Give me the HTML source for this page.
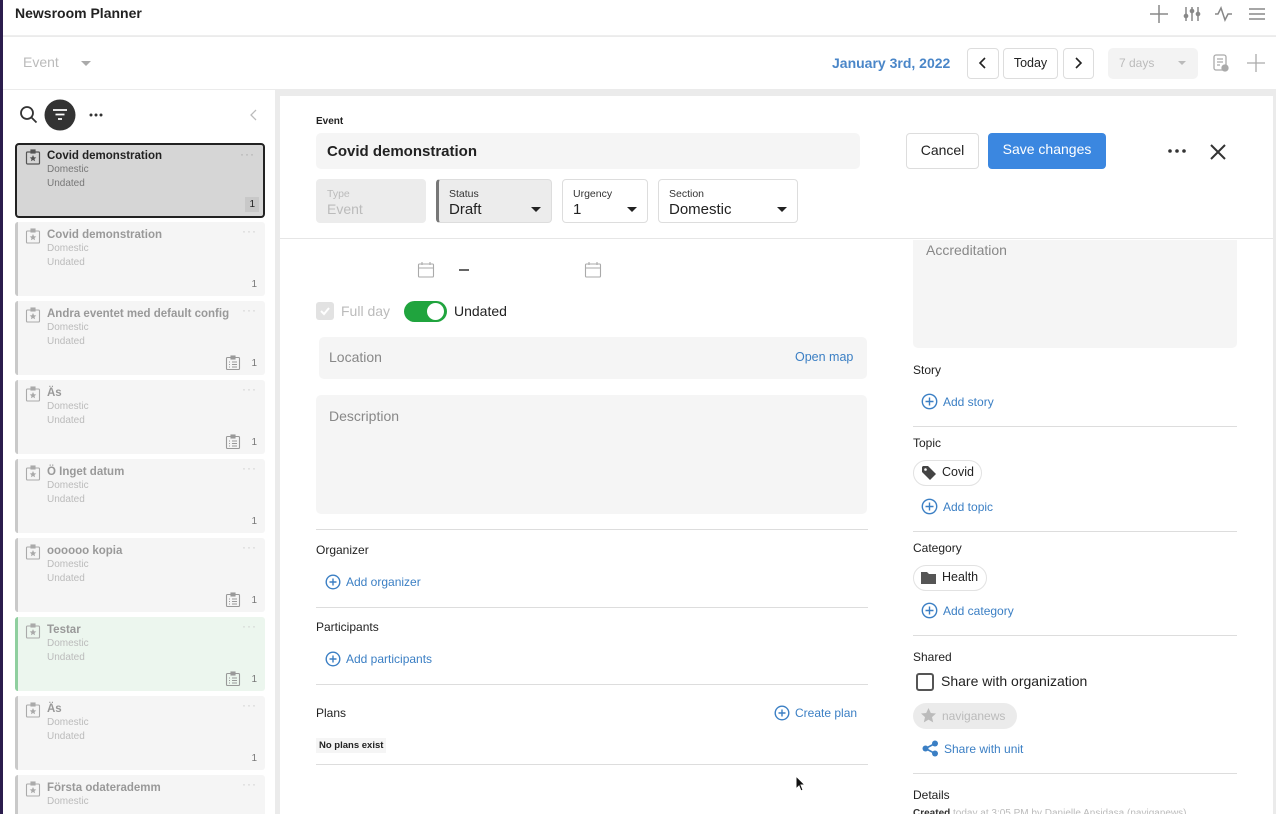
<!DOCTYPE html>
<html><head><meta charset="utf-8"><style>
*{box-sizing:border-box;margin:0;padding:0}
html,body{width:1276px;height:814px;overflow:hidden}
body{background:#ebebeb;font-family:"Liberation Sans",sans-serif;position:relative;color:#222}
.a{position:absolute}
.card{position:absolute;left:15px;width:250px;height:74px;background:#f5f5f5;border-left:3px solid #c9c9c9;border-radius:3px}
.card .t{position:absolute;left:29px;top:7px;font-size:11.5px;font-weight:bold;color:#999;white-space:nowrap}
.card .s{position:absolute;left:29px;font-size:10px;color:#bbb}
.card .d{position:absolute;right:8px;top:2px;color:#ccc;font-size:12px;letter-spacing:1px}
.card .n{position:absolute;right:8px;bottom:6px;font-size:10px;color:#777}
.card .cl{position:absolute;right:24px;bottom:4px}
.lbl{position:absolute;font-size:12px;color:#222}
.add{position:absolute;font-size:12px;color:#3b7fc4;display:flex;align-items:center;gap:5px}
.hr{position:absolute;height:1px;background:#ddd}
.sel{position:absolute;top:179px;height:44px;border:1px solid #ddd;border-radius:4px;background:#fff}
.sel .k{position:absolute;left:10px;top:8px;font-size:10.5px;color:#333}
.sel .v{position:absolute;left:10px;top:21px;font-size:15px;color:#222}
.sel .ar{position:absolute;right:10px;top:27px;width:0;height:0;border-left:5px solid transparent;border-right:5px solid transparent;border-top:5px solid #222}
</style></head><body>
<div class="a" style="left:0;top:0;width:3px;height:814px;background:#2b1d4d"></div>
<div class="a" style="left:3px;top:0;width:1273px;height:36px;background:#fff;border-bottom:1px solid #eee"></div>
<div class="a" style="left:15px;top:5px;font-size:14px;font-weight:bold;color:#222">Newsroom Planner</div>
<svg class="a" style="left:1148px;top:4px" width="120" height="20" fill="none" stroke="#888" stroke-width="1.5">
<path d="M2 10h18M11 1v18"/>
<path d="M38 3v14M44 3v14M50 3v14"/><circle cx="38" cy="12" r="1.6" fill="#888"/><circle cx="44" cy="7" r="1.6" fill="#888"/><circle cx="50" cy="10" r="1.6" fill="#888"/>
<path d="M67 10h3l3-6 4 12 3-6h4"/>
<path d="M101 5h16M101 10h16M101 15h16"/></svg>
<div class="a" style="left:3px;top:37px;width:1273px;height:52px;background:#fff"></div>
<div class="a" style="left:23px;top:54px;font-size:14px;color:#bbb">Event</div>
<div class="a" style="left:81px;top:61px;border-left:5px solid transparent;border-right:5px solid transparent;border-top:5px solid #aaa"></div>
<div class="a" style="left:832px;top:55px;font-size:14px;font-weight:bold;color:#4a86c8">January 3rd, 2022</div>
<div class="a" style="left:967px;top:48px;width:32px;height:31px;border:1px solid #ddd;border-radius:4px"></div>
<svg class="a" style="left:977px;top:57px" width="12" height="12" fill="none" stroke="#222" stroke-width="1.6"><path d="M8 1L3 6l5 5"/></svg>
<div class="a" style="left:1003px;top:48px;width:55px;height:31px;border:1px solid #ddd;border-radius:4px;font-size:12.5px;text-align:center;line-height:29px">Today</div>
<div class="a" style="left:1063px;top:48px;width:31px;height:31px;border:1px solid #ddd;border-radius:4px"></div>
<svg class="a" style="left:1072px;top:57px" width="12" height="12" fill="none" stroke="#222" stroke-width="1.6"><path d="M4 1l5 5-5 5"/></svg>
<div class="a" style="left:1108px;top:48px;width:90px;height:31px;background:#f3f3f3;border-radius:5px;font-size:12px;color:#bbb;padding:8px 11px">7 days</div>
<div class="a" style="left:1178px;top:61px;border-left:4px solid transparent;border-right:4px solid transparent;border-top:4px solid #bbb"></div>
<svg class="a" style="left:1212px;top:53px" width="60" height="20" fill="none" stroke="#aaa" stroke-width="1.3"><rect x="2" y="2" width="12" height="15" rx="2"/><path d="M5 6h6M5 9h6M5 12h3"/><circle cx="13" cy="15" r="3" fill="#aaa"/><path d="M35 10h18M44 1v18"/></svg>

<!-- left panel -->
<div class="a" style="left:3px;top:90px;width:272px;height:724px;background:#fff"></div>
<svg class="a" style="left:17px;top:98px" width="90" height="34" fill="none" stroke="#333" stroke-width="1.8"><circle cx="10" cy="15" r="6"/><path d="M14.5 19.5l5 5"/><circle cx="43" cy="17" r="15.5" fill="#333" stroke="none"/><path d="M36 12h14M38.5 16.5h9M41 21h4" stroke="#fff"/><circle cx="74" cy="17" r="1.5" fill="#333" stroke="none"/><circle cx="79" cy="17" r="1.5" fill="#333" stroke="none"/><circle cx="84" cy="17" r="1.5" fill="#333" stroke="none"/></svg>
<svg class="a" style="left:249px;top:109px" width="10" height="14" fill="none" stroke="#bbb" stroke-width="1.3"><path d="M7 1L2 6l5 5"/></svg>

<div class="card" style="top:143px;height:75px;background:#d6d6d6;border:2px solid #222;border-radius:4px">
<svg style="position:absolute;left:8px;top:4px" width="16" height="16" fill="none" stroke="#555" stroke-width="1.2"><rect x="1.5" y="3" width="13" height="12" rx="1"/><rect x="6" y="1" width="4" height="3" fill="#555"/><path d="M8 6l1 2.3 2.3.2-1.8 1.5.6 2.3L8 11l-2.1 1.3.6-2.3-1.8-1.5 2.3-.2z" fill="#555" stroke="none"/></svg>
<div class="t" style="color:#222;left:30px;top:5px">Covid demonstration</div><div class="s" style="top:19px;left:30px;color:#777">Domestic</div><div class="s" style="top:33px;left:30px;color:#777">Undated</div><div class="d" style="color:#aaa">···</div>
<div class="n" style="color:#222;background:#c8c8c8;padding:2px 4px;right:4px;bottom:4px">1</div></div>

<div class="card" style="top:222px"><div class="t">Covid demonstration</div><div class="s" style="top:21px">Domestic</div><div class="s" style="top:35px">Undated</div><div class="d">···</div><div class="n">1</div></div>
<div class="card" style="top:301px"><div class="t">Andra eventet med default config</div><div class="s" style="top:21px">Domestic</div><div class="s" style="top:35px">Undated</div><div class="d">···</div><div class="n">1</div><svg class="cl" width="16" height="16" fill="none" stroke="#999" stroke-width="1.1"><rect x="1.5" y="2.5" width="13" height="12" rx="1"/><rect x="6" y="1" width="4" height="3" fill="#999"/><path d="M4 7h1M7 7h5M4 9.5h1M7 9.5h5M4 12h1M7 12h5"/></svg></div>
<div class="card" style="top:380px"><div class="t">Äs</div><div class="s" style="top:21px">Domestic</div><div class="s" style="top:35px">Undated</div><div class="d">···</div><div class="n">1</div><svg class="cl" width="16" height="16" fill="none" stroke="#999" stroke-width="1.1"><rect x="1.5" y="2.5" width="13" height="12" rx="1"/><rect x="6" y="1" width="4" height="3" fill="#999"/><path d="M4 7h1M7 7h5M4 9.5h1M7 9.5h5M4 12h1M7 12h5"/></svg></div>
<div class="card" style="top:459px"><div class="t">Ö Inget datum</div><div class="s" style="top:21px">Domestic</div><div class="s" style="top:35px">Undated</div><div class="d">···</div><div class="n">1</div></div>
<div class="card" style="top:538px"><div class="t">oooooo kopia</div><div class="s" style="top:21px">Domestic</div><div class="s" style="top:35px">Undated</div><div class="d">···</div><div class="n">1</div><svg class="cl" width="16" height="16" fill="none" stroke="#999" stroke-width="1.1"><rect x="1.5" y="2.5" width="13" height="12" rx="1"/><rect x="6" y="1" width="4" height="3" fill="#999"/><path d="M4 7h1M7 7h5M4 9.5h1M7 9.5h5M4 12h1M7 12h5"/></svg></div>
<div class="card" style="top:617px;background:#ecf6ee;border-left-color:#8fcf9f"><div class="t">Testar</div><div class="s" style="top:21px">Domestic</div><div class="s" style="top:35px">Undated</div><div class="d">···</div><div class="n">1</div><svg class="cl" width="16" height="16" fill="none" stroke="#999" stroke-width="1.1"><rect x="1.5" y="2.5" width="13" height="12" rx="1"/><rect x="6" y="1" width="4" height="3" fill="#999"/><path d="M4 7h1M7 7h5M4 9.5h1M7 9.5h5M4 12h1M7 12h5"/></svg></div>
<div class="card" style="top:696px"><div class="t">Äs</div><div class="s" style="top:21px">Domestic</div><div class="s" style="top:35px">Undated</div><div class="d">···</div><div class="n">1</div></div>
<div class="card" style="top:775px;height:39px;border-radius:3px 3px 0 0"><div class="t">Första odaterademm</div><div class="s" style="top:21px">Domestic</div><div class="d">···</div></div>
<svg class="a" style="left:25px;top:228px" width="16" height="580" fill="none" stroke="#aaa" stroke-width="1.1">
<g id="i"><rect x="1.5" y="3" width="13" height="12" rx="1"/><rect x="6" y="1" width="4" height="3" fill="#aaa"/><path d="M8 6l1 2.3 2.3.2-1.8 1.5.6 2.3L8 11l-2.1 1.3.6-2.3-1.8-1.5 2.3-.2z" fill="#aaa" stroke="none"/></g>
<use href="#i" y="79"/><use href="#i" y="158"/><use href="#i" y="237"/><use href="#i" y="316"/><use href="#i" y="395"/><use href="#i" y="474"/><use href="#i" y="553"/></svg>

<!-- main panel -->
<div class="a" style="left:280px;top:96px;width:993px;height:718px;background:#fff"></div>
<div class="a" style="left:316px;top:116px;font-size:10px;font-weight:bold;color:#222">Event</div>
<div class="a" style="left:316px;top:133px;width:544px;height:36px;background:#f5f5f5;border-radius:5px;font-size:15px;font-weight:bold;padding:10px 11px">Covid demonstration</div>
<div class="a" style="left:906px;top:133px;width:73px;height:36px;border:1px solid #ddd;border-radius:4px;font-size:14px;text-align:center;line-height:32px">Cancel</div>
<div class="a" style="left:988px;top:133px;width:118px;height:36px;background:#3b87e0;border-radius:4px;font-size:14px;color:#fff;text-align:center;line-height:32px">Save changes</div>
<svg class="a" style="left:1166px;top:144px" width="64" height="16" fill="#333"><circle cx="4" cy="7" r="1.8"/><circle cx="11" cy="7" r="1.8"/><circle cx="18" cy="7" r="1.8"/><path d="M45 1l14 14M59 1L45 15" stroke="#333" stroke-width="2"/></svg>
<div class="sel" style="left:316px;width:110px;background:#ececec;border-color:#ececec"><div class="k" style="color:#bbb">Type</div><div class="v" style="color:#bbb;font-size:14px">Event</div></div>
<div class="sel" style="left:436px;width:116px;background:#ececec;border-left:3px solid #777"><div class="k">Status</div><div class="v">Draft</div><div class="ar"></div></div>
<div class="sel" style="left:562px;width:86px"><div class="k">Urgency</div><div class="v">1</div><div class="ar"></div></div>
<div class="sel" style="left:658px;width:140px"><div class="k">Section</div><div class="v">Domestic</div><div class="ar"></div></div>
<div class="hr" style="left:280px;top:238px;width:993px;background:#e6e6e6"></div>

<svg class="a" style="left:417px;top:261px" width="190" height="18" fill="none" stroke="#aaa" stroke-width="1.1"><rect x="1.5" y="3" width="15" height="13" rx="1"/><path d="M1.5 7h15M5 1v3M13 1v3"/><path d="M42 9h10" stroke="#333" stroke-width="1.5"/><rect x="168.5" y="3" width="15" height="13" rx="1"/><path d="M168.5 7h15M172 1v3M180 1v3"/></svg>
<div class="a" style="left:316px;top:302px;width:18px;height:18px;background:#e2e2e2;border-radius:3px"></div>
<svg class="a" style="left:319px;top:305px" width="12" height="12" fill="none" stroke="#fff" stroke-width="2"><path d="M2 6l3 3 5-6"/></svg>
<div class="a" style="left:341px;top:303px;font-size:14px;color:#bbb">Full day</div>
<div class="a" style="left:404px;top:301px;width:43px;height:21px;background:#20a43e;border-radius:11px"></div>
<div class="a" style="left:427px;top:303px;width:17px;height:17px;background:#fff;border-radius:50%"></div>
<div class="a" style="left:454px;top:303px;font-size:14px;color:#222">Undated</div>
<div class="a" style="left:319px;top:337px;width:548px;height:42px;background:#f5f5f5;border-radius:5px"></div>
<div class="a" style="left:329px;top:349px;font-size:14px;color:#888">Location</div>
<div class="a" style="left:795px;top:350px;font-size:12.5px;color:#3b7fc4">Open map</div>
<div class="a" style="left:316px;top:395px;width:551px;height:119px;background:#f5f5f5;border-radius:5px"></div>
<div class="a" style="left:329px;top:408px;font-size:14px;color:#888">Description</div>
<div class="hr" style="left:316px;top:529px;width:552px"></div>
<div class="lbl" style="left:316px;top:543px">Organizer</div>
<div class="add" style="left:325px;top:574px"><svg width="16" height="16" fill="none" stroke="#3b7fc4" stroke-width="1.4"><circle cx="8" cy="8" r="6.8"/><path d="M8 4.5v7M4.5 8h7"/></svg>Add organizer</div>
<div class="hr" style="left:316px;top:607px;width:552px"></div>
<div class="lbl" style="left:316px;top:620px">Participants</div>
<div class="add" style="left:325px;top:651px"><svg width="16" height="16" fill="none" stroke="#3b7fc4" stroke-width="1.4"><circle cx="8" cy="8" r="6.8"/><path d="M8 4.5v7M4.5 8h7"/></svg>Add participants</div>
<div class="hr" style="left:316px;top:684px;width:552px"></div>
<div class="lbl" style="left:316px;top:706px">Plans</div>
<div class="add" style="left:774px;top:705px"><svg width="16" height="16" fill="none" stroke="#3b7fc4" stroke-width="1.4"><circle cx="8" cy="8" r="6.8"/><path d="M8 4.5v7M4.5 8h7"/></svg>Create plan</div>
<div class="a" style="left:316px;top:738px;padding:2px 3px;background:#f5f5f5;font-size:9.5px;font-weight:bold">No plans exist</div>
<div class="hr" style="left:316px;top:764px;width:552px"></div>
<svg class="a" style="left:795px;top:775px" width="12" height="18"><path d="M1 1v13l3-3 2 5 2-1-2-5h4z" fill="#111" stroke="#fff" stroke-width="1"/></svg>

<!-- right column -->
<div class="a" style="left:913px;top:240px;width:324px;height:108px;background:#f5f5f5;border-radius:0 0 5px 5px"></div>
<div class="a" style="left:926px;top:242px;font-size:14px;color:#888">Accreditation</div>
<div class="lbl" style="left:913px;top:363px">Story</div>
<div class="add" style="left:921px;top:393px"><svg width="17" height="17" fill="none" stroke="#3b7fc4" stroke-width="1.4"><circle cx="8.5" cy="8.5" r="7.2"/><path d="M8.5 4.5v8M4.5 8.5h8"/></svg>Add story</div>
<div class="hr" style="left:913px;top:426px;width:324px"></div>
<div class="lbl" style="left:913px;top:436px">Topic</div>
<div class="a" style="left:913px;top:460px;width:69px;height:26px;border:1px solid #e2e2e2;border-radius:13px"></div>
<svg class="a" style="left:921px;top:465px" width="16" height="16"><path d="M1 2v5l8 8 6-6-8-8H2z" fill="#444"/><circle cx="4.5" cy="4.5" r="1.3" fill="#fff"/></svg>
<div class="a" style="left:942px;top:465px;font-size:12.5px">Covid</div>
<div class="add" style="left:921px;top:498px"><svg width="17" height="17" fill="none" stroke="#3b7fc4" stroke-width="1.4"><circle cx="8.5" cy="8.5" r="7.2"/><path d="M8.5 4.5v8M4.5 8.5h8"/></svg>Add topic</div>
<div class="hr" style="left:913px;top:531px;width:324px"></div>
<div class="lbl" style="left:913px;top:541px">Category</div>
<div class="a" style="left:913px;top:565px;width:74px;height:26px;border:1px solid #e2e2e2;border-radius:13px"></div>
<svg class="a" style="left:920px;top:571px" width="17" height="14"><path d="M1 1h6l2 2h7v10H1z" fill="#555"/></svg>
<div class="a" style="left:942px;top:570px;font-size:12.5px">Health</div>
<div class="add" style="left:921px;top:602px"><svg width="17" height="17" fill="none" stroke="#3b7fc4" stroke-width="1.4"><circle cx="8.5" cy="8.5" r="7.2"/><path d="M8.5 4.5v8M4.5 8.5h8"/></svg>Add category</div>
<div class="hr" style="left:913px;top:635px;width:324px"></div>
<div class="lbl" style="left:913px;top:650px">Shared</div>
<div class="a" style="left:916px;top:673px;width:18px;height:18px;border:2px solid #555;border-radius:3px"></div>
<div class="a" style="left:941px;top:673px;font-size:14px">Share with organization</div>
<div class="a" style="left:913px;top:703px;width:104px;height:26px;background:#ebebeb;border-radius:13px"></div>
<svg class="a" style="left:920px;top:707px" width="17" height="17"><path d="M8.5 1l2.3 5 5.2.5-4 3.6 1.2 5.3-4.7-2.8-4.7 2.8 1.2-5.3-4-3.6 5.2-.5z" fill="#bbb"/></svg>
<div class="a" style="left:942px;top:709px;font-size:12px;color:#bbb">naviganews</div>
<div class="add" style="left:922px;top:740px"><svg width="17" height="17" fill="#3b7fc4"><circle cx="3.5" cy="8.5" r="3"/><circle cx="13" cy="3.5" r="3"/><circle cx="13" cy="13.5" r="3"/><path d="M3.5 8.5L13 3.5M3.5 8.5L13 13.5" stroke="#3b7fc4" stroke-width="1.6"/></svg>Share with unit</div>
<div class="hr" style="left:913px;top:773px;width:324px"></div>
<div class="lbl" style="left:913px;top:788px">Details</div>
<div class="a" style="left:913px;top:808px;font-size:10px;color:#bbb;white-space:nowrap"><b style="color:#333">Created</b> today at 3:05 PM by Danielle Ansidasa (naviganews)</div>
</body></html>
